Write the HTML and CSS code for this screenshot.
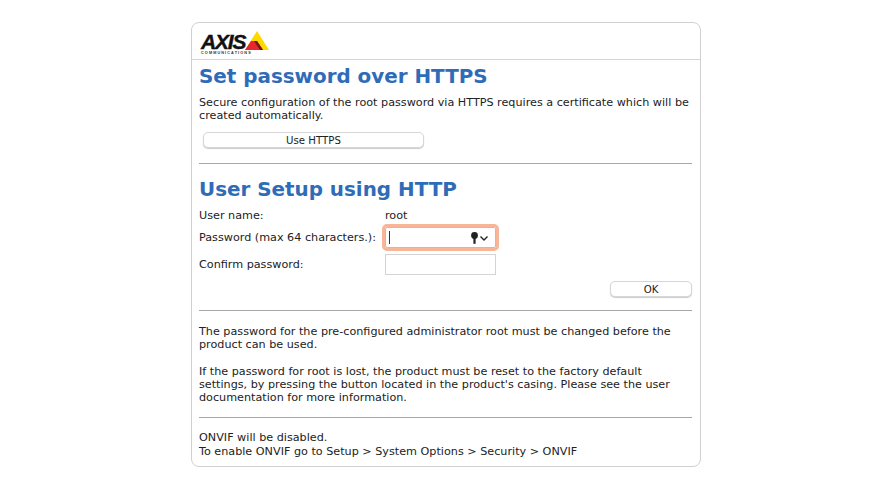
FILE: index.html
```html
<!DOCTYPE html>
<html lang="en">
<head>
  <meta charset="UTF-8" />
  <meta name="viewport" content="width=device-width, initial-scale=1.0" />
  <title>AXIS root password setup</title>
  <link rel="stylesheet" href="styles.css">
</head>
<body>
  <div class="panel">
    <div class="logo-bar">
      <div class="logo">
        <div class="logo-top">
          <span class="logo-axis">AXIS</span>
          <svg class="logo-mark" width="24" height="19" viewBox="0 0 24 19">
            <polygon points="12,0 24,19 0,19" fill="#ffd800"/>
            <polygon points="0,19 6,10 12,10 18,19" fill="#e8262d"/>
            <polygon points="9,10 12,10 18,19 15,19" fill="#6b1a16"/>
          </svg>
        </div>
        <div class="logo-sub">COMMUNICATIONS</div>
      </div>
    </div>
    <div class="body">
      <h1>Set password over HTTPS</h1>
      <p class="intro">Secure configuration of the root password via HTTPS requires a certificate which will be created automatically.</p>
      <button class="btn btn-https">Use HTTPS</button>
      <hr>
      <h1 class="second">User Setup using HTTP</h1>
      <div class="form-row row-user">
        <span class="label">User name:</span>
        <span class="value">root</span>
      </div>
      <div class="form-row row-pass">
        <span class="label">Password (max 64 characters.):</span>
        <div class="input focused">
          <span class="caret"></span>
          <svg class="key" width="20" height="12" viewBox="0 0 20 12">
            <circle cx="3.5" cy="3.5" r="3.4" fill="#222"/>
            <rect x="2.4" y="5" width="2.2" height="6.8" fill="#222"/>
            <path d="M9.5 4.5 L13 8 L16.5 4.5" fill="none" stroke="#222" stroke-width="1.4"/>
          </svg>
        </div>
      </div>
      <div class="form-row row-confirm">
        <span class="label">Confirm password:</span>
        <div class="input"></div>
      </div>
      <div class="ok-row"><button class="btn btn-ok">OK</button></div>
      <hr class="hr-ok">
      <p>The password for the pre-configured administrator root must be changed before the product can be used.</p>
      <p class="gap">If the password for root is lost, the product must be reset to the factory default settings, by pressing the button located in the product's casing. Please see the user documentation for more information.</p>
      <hr class="hr-onvif">
      <p class="onvif">ONVIF will be disabled.<br>To enable ONVIF go to Setup &gt; System Options &gt; Security &gt; ONVIF</p>
    </div>
  </div>
</body>
</html>
```

FILE: styles.css
```css
body { margin: 0; background: #fff; color: #222; font-family: "DejaVu Sans", Verdana, sans-serif; font-size: 11.2px; line-height: 13px; }
.panel { box-sizing: border-box; width: 510px; height: 445px; margin: 22px 0 0 191px; border: 1px solid #d0d0d0; border-radius: 8px; }
.logo-bar { height: 36px; border-bottom: 1px solid #d4d4d4; padding-left: 9px; }
.logo { width: 70px; padding-top: 8px; }
.logo-top { display: flex; align-items: flex-end; height: 19px; }
.logo-axis { font-family: "Liberation Sans", Arial, sans-serif; font-weight: bold; font-style: italic; font-size: 21px; line-height: 17px; color: #111; letter-spacing: -1.2px; -webkit-text-stroke: 0.4px #111; }
.logo-mark { flex: none; }
.logo-sub { font-family: "Liberation Sans", Arial, sans-serif; font-size: 3.8px; line-height: 5px; margin-top: 1px; letter-spacing: 1.1px; font-weight: bold; color: #333; white-space: nowrap; }
.body { padding: 0 8px 0 7px; }
h1 { margin: 4px 0 0; font-size: 19.9px; line-height: 26px; font-weight: bold; color: #2f6cb8; }
h1.second { margin-top: 13px; }
p { margin: 0; }
.intro { margin-top: 6px; }
.gap { margin-top: 14px; }
.btn { display: block; box-sizing: border-box; height: 16px; padding: 0; background: #fff; border: 1px solid #d6d6d6; border-radius: 5px; box-shadow: 0 1px 1px #ccc; font-family: inherit; font-size: 10.2px; color: #222; }
.btn-https { width: 221px; margin: 10px 0 0 4px; }
hr { height: 0; margin: 15px 0 0; border: 0; border-top: 1.5px solid #a8a8a8; }
.form-row { display: flex; align-items: center; }
.label { width: 186px; flex: none; }
.row-user { margin-top: 4px; height: 17px; }
.row-pass { margin-top: 1px; height: 25px; }
.row-confirm { margin-top: 2px; height: 25px; }
.input { box-sizing: border-box; width: 111px; height: 21px; border: 1px solid #d4d4d4; background: #fff; display: flex; align-items: center; justify-content: space-between; padding: 0 4px 0 3px; }
.focused { border: 1px solid #d9b5a2; outline: 3px solid #f9b597; border-radius: 2px; }
.caret { width: 1px; height: 13px; background: #333; }
.ok-row { display: flex; justify-content: flex-end; margin-top: 4px; }
.btn-ok { width: 82px; }
.hr-ok { margin-top: 13px; }
.hr-ok + p { margin-top: 14px; }
.hr-onvif { margin-top: 13px; }
.onvif { margin-top: 13px; line-height: 14px; }
```
